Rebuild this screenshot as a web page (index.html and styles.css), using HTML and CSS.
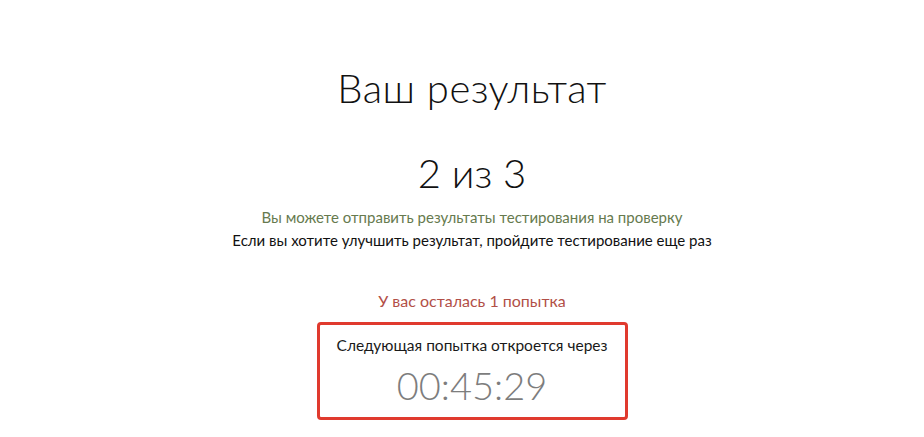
FILE: index.html
```html
<!DOCTYPE html>
<html lang="ru">
<head>
<meta charset="utf-8">
<link rel="stylesheet" href="styles.css">
</head>
<body>
<main class="result">
  <h1 class="title">Ваш результат</h1>
  <div class="score">2 из 3</div>
  <p class="note note-green">Вы можете отправить результаты тестирования на проверку</p>
  <p class="note">Если вы хотите улучшить результат, пройдите тестирование еще раз</p>
  <p class="attempts">У вас осталась 1 попытка</p>
  <div class="timer-box">
    <div class="timer-label">Следующая попытка откроется через</div>
    <div class="timer">00:45:29</div>
  </div>
</main>
</body>
</html>
```

FILE: styles.css
```css
html, body {
  margin: 0;
  padding: 0;
  background: #ffffff;
}
body {
  font-family: "Lato", "Open Sans", sans-serif;
  color: #111111;
}
.result {
  width: 904px;
  padding-left: 20px;
  display: flex;
  flex-direction: column;
  align-items: center;
  padding-top: 64px;
}
.title {
  margin: 0;
  font-weight: 300;
  font-size: 40px;
  line-height: 48px;
  letter-spacing: 0.5px;
}
.score {
  margin-top: 38px;
  font-weight: 300;
  font-size: 40px;
  line-height: 46px;
}
.note {
  margin: 0;
  font-size: 15px;
  line-height: 23px;
}
.note-green {
  margin-top: 10px;
  color: #667a4e;
}
.attempts {
  margin: 39px 0 0;
  font-size: 16px;
  line-height: 20px;
  color: #b24f47;
}
.timer-box {
  box-sizing: border-box;
  margin-top: 11px;
  width: 311px;
  height: 98px;
  border: 3px solid #e03a2e;
  border-radius: 4px;
  display: flex;
  flex-direction: column;
  align-items: center;
}
.timer-label {
  margin-top: 10px;
  font-size: 15.5px;
  line-height: 20px;
  color: #1a1a1a;
}
.timer {
  margin-top: 8px;
  font-weight: 300;
  font-size: 38px;
  line-height: 44px;
  color: #7d7d7d;
}
```
